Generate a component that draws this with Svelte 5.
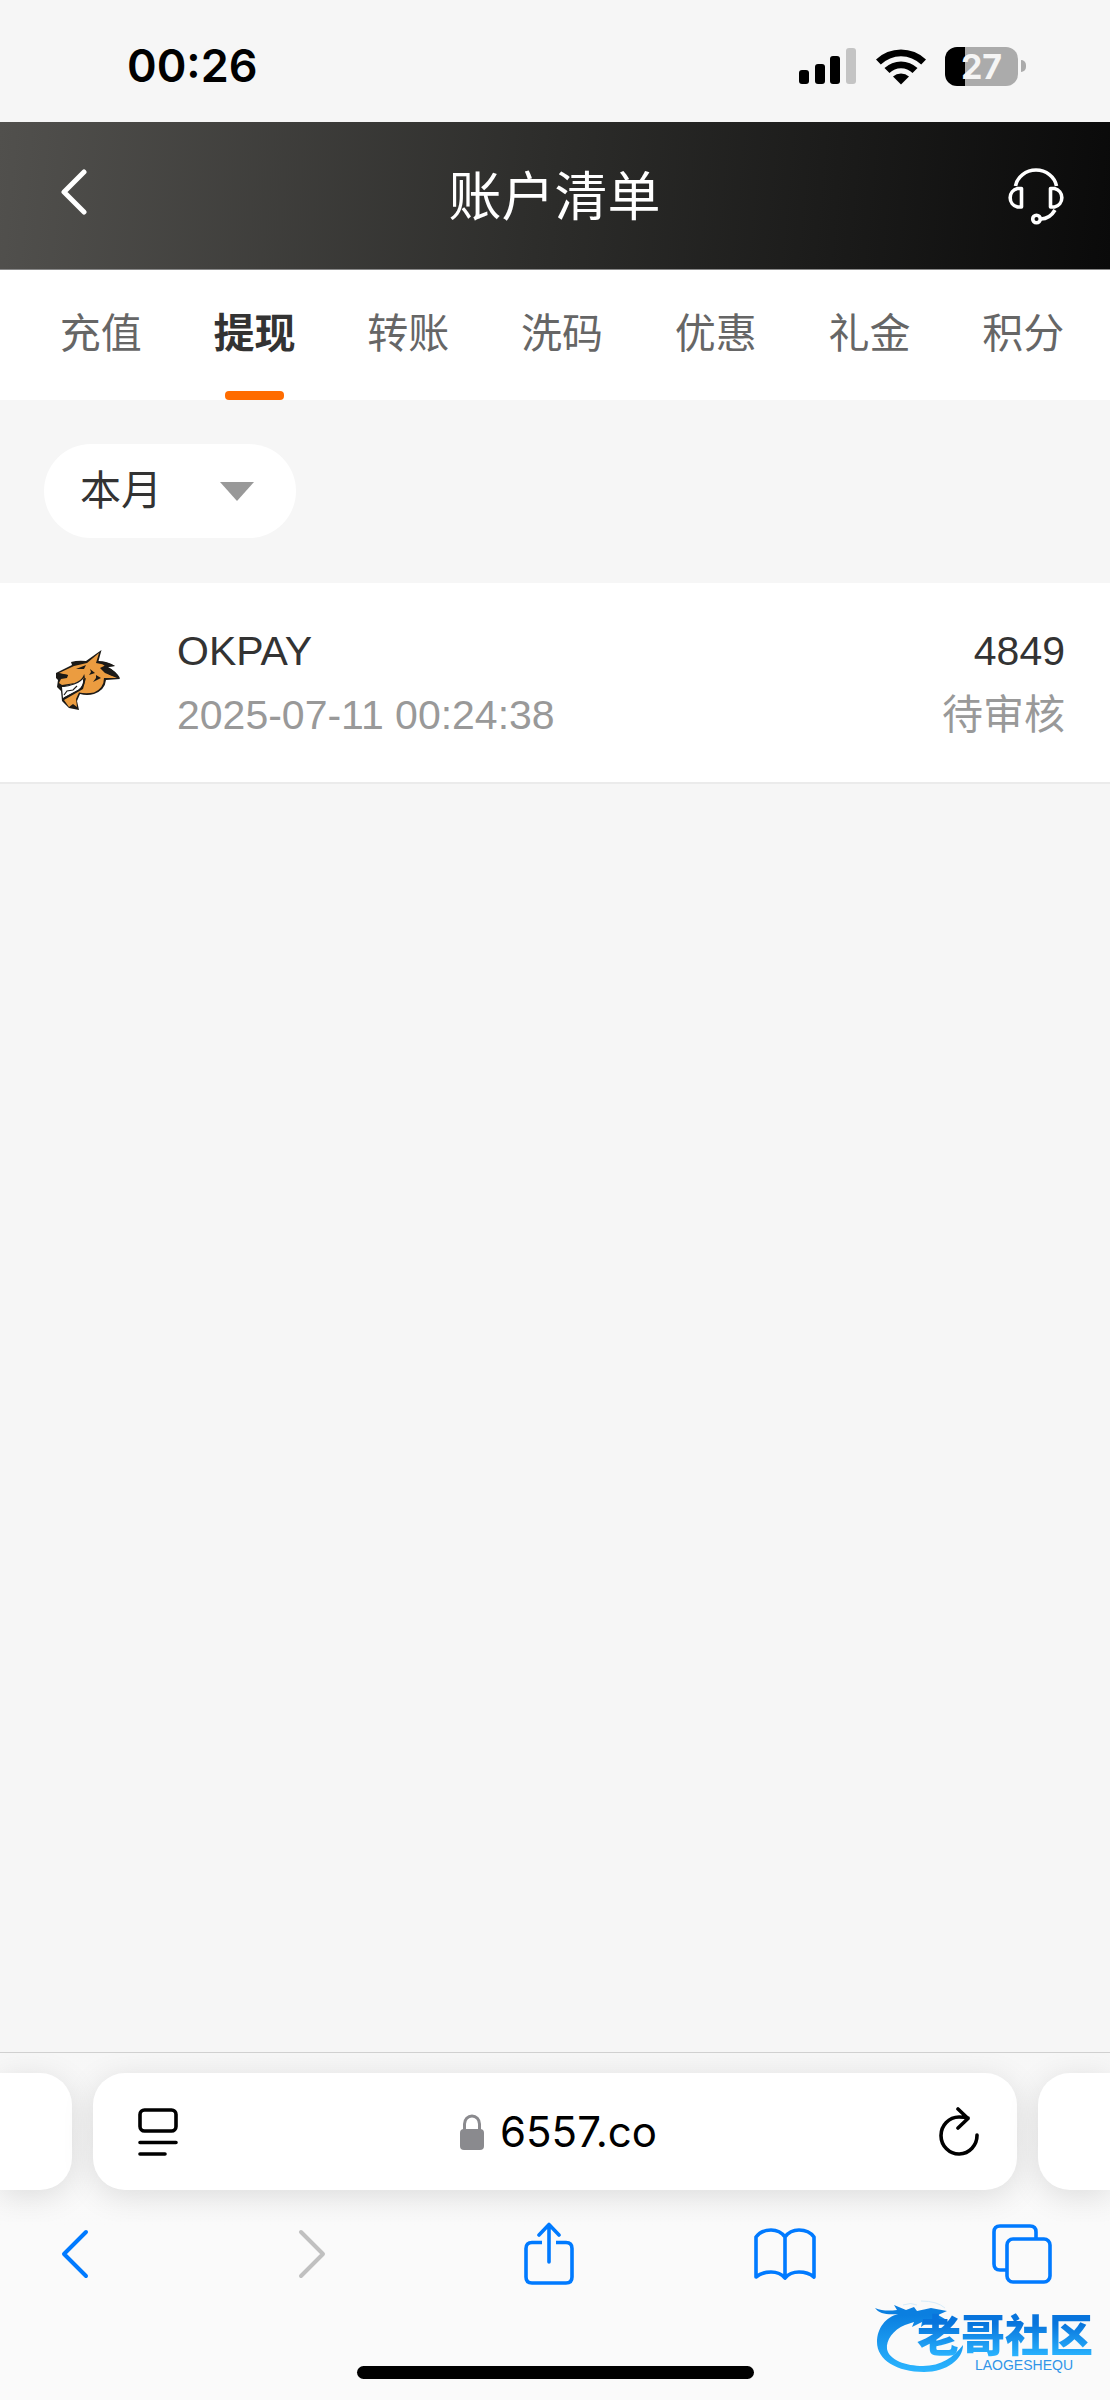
<script>
  const tabs = ['充值', '提现', '转账', '洗码', '优惠', '礼金', '积分'];
  let active = $state('提现');
  let period = $state('本月');
  const records = [{ name: 'OKPAY', time: '2025-07-11 00:24:38', amount: '4849', status: '待审核' }];
</script>

<div class="screen">
  <div class="status">
    <time class="clock">00:26</time>
    <div class="indicators">
      <svg width="58" height="37" viewBox="0 0 58 37" aria-hidden="true">
        <rect x="0" y="22" width="10" height="14" rx="3" />
        <rect x="16" y="16" width="10" height="20" rx="3" />
        <rect x="31" y="8" width="10" height="28" rx="3" />
        <rect x="47" y="0" width="10" height="36" rx="3" fill="#c4c4c4" />
      </svg>
      <svg width="50" height="37" viewBox="0 0 50 37" aria-hidden="true">
        <path d="M0 11.500A36 36 0 0 1 50 11.500L45.200 16.500A29 29 0 0 0 4.800 16.500Z" />
        <path d="M8.500 20A24 24 0 0 1 41.500 20L36.500 25A16.500 16.500 0 0 0 13.500 25Z" />
        <path d="M17 28.500A12 12 0 0 1 33 28.500L25 36.500Z" />
      </svg>
      <div class="battery"><span>27</span></div>
    </div>
  </div>

  <header>
    <button class="icon" aria-label="返回">
      <svg width="28" height="46" viewBox="0 0 28 46" fill="none" stroke="#fff" stroke-width="5" stroke-linecap="round" stroke-linejoin="round"><path d="M24 3L4 23L24 43" /></svg>
    </button>
    <h1>账户清单</h1>
    <button class="icon" aria-label="客服">
      <svg width="60" height="60" viewBox="0 0 60 60" fill="none" stroke="#fff" stroke-width="3.600" stroke-linejoin="round">
        <path d="M9.500 21A20.800 19.200 0 0 1 50.500 21" />
        <path d="M15.500 23.500H11.500A9.500 9.500 0 0 0 11.500 42H15.500Z" />
        <path d="M44.500 23.500H48.500A9.500 9.500 0 0 1 48.500 42H44.500Z" />
        <path d="M49 45C46 50 41 54 35 54" />
        <circle cx="30.500" cy="54" r="3.800" />
      </svg>
    </button>
  </header>

  <nav class="tabs">
    {#each tabs as tab}
      <button class:active={tab === active} onclick={() => (active = tab)}>{tab}</button>
    {/each}
  </nav>

  <main>
    <div class="filter">
      <label class="pill">
        <select bind:value={period} aria-label="时间范围">
          <option>本月</option>
          <option>上月</option>
        </select>
        <svg width="34" height="19" viewBox="0 0 34 19" fill="#999" aria-hidden="true"><path d="M0 0H34L17 19Z" /></svg>
      </label>
    </div>
    <ul>
      {#each records as r}
        <li>
          <svg class="logo" width="65" height="60" viewBox="0 0 65 60" aria-hidden="true">
            <path fill="#1c1a17" d="M0 23L16 15L15 12Q22 10 30 11L45.500 0L42.500 11Q51 11 59 16L52 17Q60 21 64 29L50 30Q49 40 38 44Q31 46 24 44L21 51L23 60L13 58L6 51L5 41L1 37L2 30L0 28Z" />
            <path fill="#eb9c40" d="M3 23L18 16L31 13L43 3L40 13L50 15L44 18L49 23L61 28L48 28Q48 38 38 42.500Q30 44 23 42.500L20 49L21 57L17 54L13 57L8 50L27 39L30 28L19 33L6 35L3 33L5 29L11 28L12 25Z" />
            <path fill="#1c1a17" d="M44 12Q52 12 59 16L51 17Q60 21 64 28L54 25L46 19L50 17Z" />
            <path fill="#fff" d="M6 37L17 34L27 29Q28 36 22 40L7 48Z" />
            <path fill="#1c1a17" d="M0 23L12 25L10 28L2 28ZM20 19L30 15L28 19L22 19ZM34 19L39 23L33 25L35 22ZM40 25L45 28L37 32L40 28Z" />
            <path fill="none" stroke="#1c1a17" stroke-width="1.200" d="M3 35Q7 38 18 34Q26 31 28 26Q30 34 23 40L8 48M8 45L11 41L17 40L21 36" />
          </svg>
          <div class="info"><strong>{r.name}</strong><span>{r.time}</span></div>
          <div class="sum"><strong>{r.amount}</strong><span>{r.status}</span></div>
        </li>
      {/each}
    </ul>
  </main>

  <footer>
    <div class="address">
      <div class="peek left"></div>
      <div class="bar">
        <button class="icon" aria-label="页面菜单">
          <svg width="40" height="50" viewBox="0 0 40 50" fill="none" stroke="#000" stroke-width="3.600" stroke-linecap="round">
            <rect x="2" y="3" width="36" height="21" rx="4.500" />
            <path d="M2 35.500H38M2 47H27" />
          </svg>
        </button>
        <a href="https://6557.co">
          <svg width="24" height="36" viewBox="0 0 24 36" aria-hidden="true">
            <rect y="15" width="24" height="21" rx="4" fill="#8a8a8e" />
            <path d="M4.500 17V10A7.500 8 0 0 1 19.500 10V17" fill="none" stroke="#8a8a8e" stroke-width="3" />
          </svg>
          <span>6557.co</span>
        </a>
        <button class="icon" aria-label="刷新">
          <svg width="40" height="50" viewBox="0 0 40 50" fill="none" stroke="#000" stroke-width="3.600" stroke-linecap="round" stroke-linejoin="round">
            <path d="M38 28A18 18.500 0 1 1 20 10Q25 10 29 11M19 2L29 11.500L19 21" />
          </svg>
        </button>
      </div>
      <div class="peek right"></div>
    </div>
    <div class="tools">
      <button class="icon" aria-label="后退">
        <svg width="28" height="52" viewBox="0 0 28 52" fill="none" stroke="#007aff" stroke-width="4" stroke-linecap="round" stroke-linejoin="round"><path d="M25 4L3 26L25 48" /></svg>
      </button>
      <button class="icon" aria-label="前进" disabled>
        <svg width="28" height="52" viewBox="0 0 28 52" fill="none" stroke="#c0c0c0" stroke-width="4" stroke-linecap="round" stroke-linejoin="round"><path d="M3 4L25 26L3 48" /></svg>
      </button>
      <button class="icon" aria-label="分享">
        <svg width="50" height="64" viewBox="0 0 50 64" fill="none" stroke="#007aff" stroke-width="3.600">
          <path d="M18 20.500H8Q2 20.500 2 26.500V55Q2 61 8 61H42Q48 61 48 55V26.500Q48 20.500 42 20.500H32" />
          <path d="M25 40V3M15 13L25 2.500L35 13" stroke-linecap="round" stroke-linejoin="round" />
        </svg>
      </button>
      <button class="icon" aria-label="书签">
        <svg width="62" height="54" viewBox="0 0 62 54" fill="none" stroke="#007aff" stroke-width="3.600" stroke-linejoin="round">
          <path d="M31 10Q26 3 17 3Q7 3 2 10V50Q8 45 17 45Q26 45 31 51Q36 45 45 45Q54 45 60 50V10Q55 3 45 3Q36 3 31 10ZV51" />
        </svg>
      </button>
      <button class="icon" aria-label="标签页">
        <svg width="60" height="60" viewBox="0 0 60 60" fill="none" stroke="#007aff" stroke-width="3.600">
          <path d="M15 46H8Q2 46 2 40V8Q2 2 8 2H38Q44 2 44 8V15" />
          <rect x="15" y="15" width="43" height="43" rx="6" />
        </svg>
      </button>
    </div>
    <div class="home"></div>
    <div class="watermark">
      <svg width="90" height="74" viewBox="0 0 90 74" aria-hidden="true">
        <defs>
          <linearGradient id="blue" x1="0" y1="0" x2="0" y2="1"><stop offset="0.150" stop-color="#0b7fe0" /><stop offset="1" stop-color="#2bb5ff" /></linearGradient>
        </defs>
        <path fill="url(#blue)" d="M0 9C7 12 14 12 22 11L19 6L31 11L39 8L42 12L56 9L72 12L63 16L70 20L58 20L68 24L53 23L46 28L47 23L37 28L39 23L30 26C18 31 11 41 12 50C14 61 31 67 48 67C66 67 79 58 88 46C88 60 72 73 49 73C22 73 2 61 2 43C2 29 11 18 23 15C13 16 4 15 0 9Z" />
        <path fill="none" stroke="#d8ecf9" d="M28 6Q36 3 42 6M46 2Q62 2 70 9" />
      </svg>
      <div class="brand"><b>老哥社区</b><small>LAOGESHEQU</small></div>
    </div>
  </footer>
</div>

<style>
  :global(body) { margin: 0; background: #f6f6f6; }
  .screen {
    min-height: 100vh;
    display: flex;
    flex-direction: column;
    background: #f6f6f6;
    color: #333;
    font-family: "Liberation Sans", "Noto Sans CJK SC", sans-serif;
    font-size: 41px;
    line-height: 64px;
  }
  button { font: inherit; color: inherit; background: none; border: 0; padding: 0; margin: 0; }
  svg { display: block; flex: none; }
  .icon { display: flex; justify-content: center; }
  .status {
    height: 122px;
    box-sizing: border-box;
    padding: 10px 84px 0 127px;
    display: flex;
    justify-content: space-between;
    align-items: center;
    color: #000;
  }
  .clock { font: 600 45px/60px Inter, sans-serif; }
  .indicators { display: flex; align-items: center; gap: 19px; }
  .battery {
    position: relative;
    width: 73px;
    height: 39px;
    margin-right: 8px;
    border-radius: 12px;
    background: linear-gradient(90deg, #000 20px, #ababab 20px);
    color: #f5f5f5;
    font: 700 34px/39px Inter, sans-serif;
    text-align: center;
  }
  .battery::after {
    content: "";
    position: absolute;
    left: 76px;
    top: 13px;
    width: 5px;
    height: 12px;
    border-radius: 0 6px 6px 0;
    background: #ababab;
  }
  header {
    height: 148px;
    box-sizing: border-box;
    padding: 0 44px 0 60px;
    display: grid;
    grid-template-columns: 1fr auto 1fr;
    align-items: center;
    background: linear-gradient(95deg, #51504d, #2c2c2a 50%, #0a0a0a);
    color: #fff;
    border-bottom: 1px solid #888;
  }
  header .icon { padding-bottom: 8px; }
  header .icon:first-child { justify-self: start; }
  header .icon:last-child { justify-self: end; padding-bottom: 2px; }
  h1 { margin: 0; padding: 4px 17px 0 0; font-size: 53px; font-weight: 400; line-height: 80px; }
  .tabs { display: flex; height: 130px; padding: 0 10px 0 24px; background: #fff; }
  .tabs button {
    flex: 1;
    display: flex;
    flex-direction: column;
    align-items: center;
    justify-content: space-between;
    padding-top: 32px;
    color: #666;
  }
  .tabs button::after { content: ""; width: 59px; height: 9px; border-radius: 4px; }
  .tabs .active { color: #333; font-weight: 700; }
  .tabs .active::after { background: #ff6c00; }
  main { flex: 1; }
  .filter { padding: 44px 44px 45px; }
  .pill {
    display: flex;
    align-items: center;
    justify-content: space-between;
    width: 252px;
    height: 94px;
    box-sizing: border-box;
    padding: 0 42px 0 36px;
    border-radius: 47px;
    background: #fff;
  }
  select { appearance: none; border: 0; padding: 0; background: none; font: inherit; color: #333; }
  ul { list-style: none; margin: 0; padding: 0; }
  li { display: flex; align-items: center; padding: 36px 45px 35px 56px; background: #fff; border-bottom: 2px solid #ebebeb; }
  .logo { margin-bottom: 6px; }
  .info { flex: 1; margin-left: 56px; }
  .info, .sum { display: flex; flex-direction: column; }
  .sum { text-align: right; }
  strong { font-weight: 400; }
  .info span, .sum span { color: #999; }
  footer { position: relative; height: 347px; display: flex; flex-direction: column; border-top: 1px solid #d0d0d0; background: linear-gradient(#f7f7f7, #fafafa 50%); }
  .address { display: flex; gap: 21px; padding: 20px 0 32px; overflow: hidden; }
  .peek, .bar { height: 117px; background: #fff; box-shadow: 0 6px 32px rgba(0, 0, 0, 0.12); }
  .peek { width: 72px; }
  .left { border-radius: 0 32px 32px 0; }
  .right { border-radius: 32px 0 0 32px; }
  .bar { flex: 1; display: flex; align-items: center; justify-content: space-between; padding: 0 38px 0 45px; border-radius: 32px; }
  a { display: flex; align-items: center; gap: 16px; color: #000; text-decoration: none; font-family: Inter, sans-serif; font-size: 42px; }
  .tools { display: flex; justify-content: space-between; align-items: center; height: 64px; padding: 0 57px 0 44px; }
  .tools .icon { width: 62px; }
  .home { width: 397px; height: 13px; margin: auto auto 21px; border-radius: 7px; background: #000; }
  .watermark { position: absolute; right: 17px; bottom: 27px; display: flex; align-items: flex-end; }
  .brand { display: flex; flex-direction: column; margin-left: -48px; }
  .brand b {
    font: 900 44px/48px "Noto Sans CJK SC", sans-serif;
    background: linear-gradient(#0874dc 30%, #2bb5ff);
    background-clip: text;
    color: transparent;
  }
  .brand small { align-self: flex-end; margin-right: 20px; font: 14px/16px "Liberation Sans", sans-serif; color: #3195e8; }
</style>
